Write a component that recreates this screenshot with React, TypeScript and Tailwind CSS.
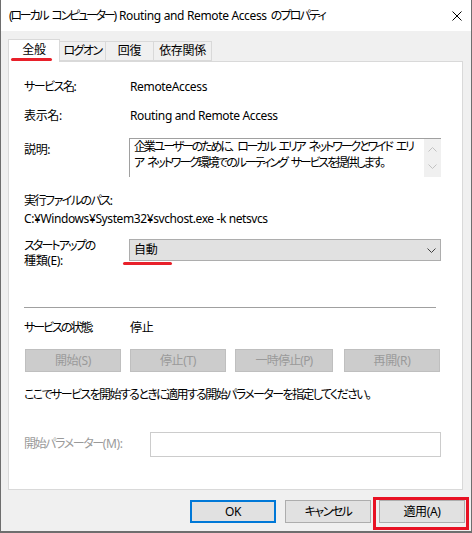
import { ReactNode } from "react";

// narrow fixed-width gap used inside tightly tracked Japanese text
function Sp() {
  return <span className="inline-block w-[4px]" />;
}

function Row({ label, children, className = "" }: { label: ReactNode; children?: ReactNode; className?: string }) {
  return (
    <div className={`flex h-[16px] items-center whitespace-nowrap ${className}`}>
      <div className="w-[106px] shrink-0">{label}</div>
      <div>{children}</div>
    </div>
  );
}

function GrayButton({ label, w, className = "" }: { label: ReactNode; w: string; className?: string }) {
  return (
    <div
      className={`flex h-[23px] items-center justify-center whitespace-nowrap border border-[#bfbfbf] bg-[#cccccc] text-[#9a9a9a] ${w} ${className}`}
    >
      {label}
    </div>
  );
}

function Chevron({ up, color }: { up?: boolean; color: string }) {
  return (
    <svg width="9" height="5" viewBox="0 0 9 5">
      <polyline
        points={up ? "0.5,4.5 4.5,0.5 8.5,4.5" : "0.5,0.5 4.5,4.5 8.5,0.5"}
        fill="none"
        stroke={color}
        strokeWidth="1"
      />
    </svg>
  );
}

export default function App() {
  return (
    <div className="flex h-[533px] w-[472px] flex-col border-x border-b-2 border-[#6e6e6e] bg-[#f0f0f0] font-['Noto_Sans','Noto_Sans_CJK_JP',sans-serif] text-[12px] leading-[16px] tracking-[-0.35px] text-black [font-feature-settings:'palt']">
      {/* title bar */}
      <div className="flex h-[31px] shrink-0 items-center justify-between whitespace-nowrap bg-white pl-[8px] pr-[9px]">
        <span>
          <span className="tracking-[-2.2px]">(ローカル</span>
          <Sp />
          <span className="tracking-[-2.2px]">コンピューター)</span>
          <Sp />
          Routing and Remote Access
          <Sp />
          <span className="tracking-[-1.8px]">のプロパティ</span>
        </span>
        <svg width="10" height="10" viewBox="0 0 10 10">
          <path d="M0.5 0.5 L9.5 9.5 M9.5 0.5 L0.5 9.5" stroke="#000" strokeWidth="1" />
        </svg>
      </div>

      {/* tabs */}
      <div className="mt-[8px] flex items-end pl-[7px]">
        <div className="relative z-10 -mb-px flex h-[23px] w-[52px] items-start justify-center border border-b-0 border-[#d9d9d9] bg-white pt-[2px]">
          <span>全般</span>
          <div className="absolute left-[2px] top-[18px] h-[3px] w-[41px] rounded-full bg-[#e8202a]" />
        </div>
        <div className="flex">
          <div className="flex h-[20px] w-[46px] items-center justify-center border-y border-r border-[#d9d9d9] tracking-[-1.5px]">ログオン</div>
          <div className="flex h-[20px] w-[48px] items-center justify-center border-y border-r border-[#d9d9d9]">回復</div>
          <div className="flex h-[20px] w-[58px] items-center justify-center border-y border-r border-[#d9d9d9]">依存関係</div>
        </div>
      </div>

      {/* panel */}
      <div className="ml-[7px] flex h-[429px] w-[455px] flex-col border border-[#d9d9d9] bg-white pl-[15px]">
        <Row label={<span className="tracking-[-1.5px]">サービス名:</span>} className="mt-[17px]">
          RemoteAccess
        </Row>
        <Row label="表示名:" className="mt-[13px]">Routing and Remote Access</Row>

        <div className="mt-[14px] flex">
          <div className="w-[105px] shrink-0 pt-[4px]">説明:</div>
          <div className="flex h-[39px] w-[312px] border-l border-t border-[#a0a0a0]">
            <div className="flex-1 overflow-hidden whitespace-nowrap pl-[4px] leading-[16px] tracking-[-2.15px]">
              企業ユーザーのために、<Sp />ローカル<Sp />エリア<Sp />ネットワークとワイド<Sp />エリ
              <br />
              ア<Sp />ネットワーク環境でのルーティング<Sp />サービスを提供します。
            </div>
            <div className="flex w-[17px] shrink-0 flex-col items-center justify-between bg-[#f0f0f0] py-[8px]">
              <Chevron up color="#c2c2c2" />
              <Chevron color="#c2c2c2" />
            </div>
          </div>
        </div>

        <div className="mt-[16px] whitespace-nowrap tracking-[-1.5px]">実行ファイルのパス:</div>
        <div className="mt-[2px] whitespace-nowrap tracking-[-0.4px]">C:¥Windows¥System32¥svchost.exe -k netsvcs</div>

        <div className="mt-[12px] flex h-[26px]">
          <div className="-mt-[1px] w-[105px] shrink-0 whitespace-nowrap leading-[15px]">
            <span className="tracking-[-1.9px]">スタートアップの</span>
            <br />
            種類(E):
          </div>
          <div className="relative flex h-[22px] w-[312px] items-center justify-between border border-[#adadad] bg-[#e1e1e1] pl-[4px] pr-[4px]">
            <span>自動</span>
            <Chevron color="#404040" />
            <div className="absolute left-[-7px] top-[22px] h-[3px] w-[49px] rounded-full bg-[#e8202a]" />
          </div>
        </div>

        <div className="mt-[42px] h-px w-[412px] bg-[#a0a0a0]" />

        <Row label={<span className="tracking-[-2px]">サービスの状態:</span>} className="mt-[12px]">
          停止
        </Row>

        <div className="mt-[13px] flex pl-[1px]">
          <GrayButton label="開始(S)" w="w-[96px]" />
          <GrayButton label="停止(T)" w="w-[96px]" className="ml-[9px]" />
          <GrayButton label={<span className="tracking-[-0.8px]">一時停止(P)</span>} w="w-[98px]" className="ml-[9px]" />
          <GrayButton label="再開(R)" w="w-[96px]" className="ml-[11px]" />
        </div>

        <div className="mt-[15px] whitespace-nowrap tracking-[-1.6px]">
          ここでサービスを開始するときに適用する開始パラメーターを指定してください。
        </div>

        <div className="mt-[29px] flex">
          <div className="w-[126px] shrink-0 whitespace-nowrap pt-[4px] text-[#9a9a9a]">
            <span className="tracking-[-1.4px]">開始パラメーター</span>(M):
          </div>
          <div className="h-[25px] w-[291px] border border-[#cccccc] bg-white" />
        </div>
      </div>

      {/* bottom buttons */}
      <div className="mt-[7px] flex items-start justify-end pr-[2px]">
        <div className="mt-[3px] flex h-[23px] w-[86px] items-center justify-center border-2 border-[#0078d7] bg-[#e1e1e1]">
          OK
        </div>
        <div className="ml-[9px] mt-[3px] flex h-[23px] w-[86px] items-center justify-center border border-[#adadad] bg-[#e1e1e1] tracking-[-1.5px]">
          キャンセル
        </div>
        <div className="ml-[2px] border-[3px] border-[#e81123] pb-[4px] pl-[3px] pr-[1px]">
          <div className="flex h-[23px] w-[86px] items-center justify-center border border-[#adadad] bg-[#e1e1e1]">
            適用(A)
          </div>
        </div>
      </div>
    </div>
  );
}
